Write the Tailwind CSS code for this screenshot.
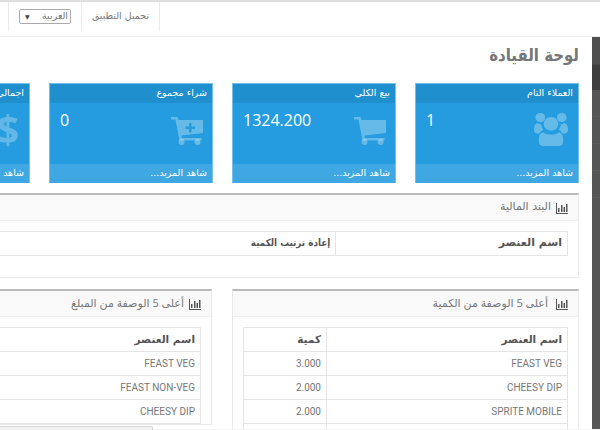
<!DOCTYPE html>
<html lang="ar" dir="rtl">
<head>
<meta charset="utf-8">
<script src="https://cdn.jsdelivr.net/npm/@tailwindcss/browser@4"></script>
<title>لوحة القيادة</title>
</head>
<body class="bg-white">
<div class="relative w-[600px] h-[430px] overflow-hidden bg-white font-['Open_Sans','DejaVu_Sans',sans-serif] text-[#666]">
  <!-- top bar -->
  <div class="h-[2px] bg-[#dfdfdf]"></div>
  <header dir="ltr" class="h-[35px] border-b border-[#eeeeee] flex items-start pl-2">
    <div class="h-[29px] w-[74px] border-x border-[#eaeaea] flex items-center justify-center">
      <div dir="rtl" class="w-[52px] h-[15px] border border-[#aaaaaa] rounded-[2px] flex items-center justify-between pr-[2px] pl-[5px] text-[9.500px] text-[#777] font-['DejaVu_Sans',sans-serif]">
        <span>العربية</span><span class="text-[6px] text-[#444]">▼</span>
      </div>
    </div>
    <div dir="rtl" class="h-[29px] w-[78px] border-r border-[#eaeaea] flex items-center justify-center text-[9.500px] text-[#777] font-['DejaVu_Sans',sans-serif]">تحميل التطبيق</div>
  </header>

  <div class="flex h-[393px]">
    <!-- right dark sidebar -->
    <aside class="w-2 shrink-0 flex flex-col bg-[#555555]">
      <div class="h-[28px] bg-[#4e4e4e] border-b border-[#484848]"></div>
      <div class="h-[25px] bg-[#3e3e3e]"></div>
      <div class="h-[27px] border-b border-[#5c5c5c]"></div>
      <div class="h-[27px] border-b border-[#5c5c5c]"></div>
      <div class="h-[27px] border-b border-[#5c5c5c]"></div>
      <div class="h-[27px] border-b border-[#5c5c5c]"></div>
    </aside>

    <main class="flex-1 min-w-0 pr-[13px] overflow-hidden">
      <h1 class="h-[46px] pt-[4px] text-[17px] leading-[28px] font-bold text-[#777] font-['DejaVu_Sans',sans-serif] origin-right scale-x-[0.88]">لوحة القيادة</h1>

      <!-- stat cards -->
      <div class="flex gap-[19px] h-[100px]">
        <div class="w-[164px] shrink-0 flex flex-col border border-b-0 border-[#74c0ea] bg-[#259cdf] text-white">
          <div class="h-[19px] bg-[#1f8fce] px-[5px] flex items-center text-[9.500px] font-['DejaVu_Sans',sans-serif]">العملاء التام</div>
          <div dir="ltr" class="flex-1 flex items-start justify-between pl-[10px] pr-[9px] pt-[6px]">
            <span class="text-[16px] leading-[22px]">1</span>
            <svg class="w-[36px] h-[34px] mt-[3px]" viewBox="0 0 37 37" preserveAspectRatio="none" fill="#fff" fill-opacity=".3">
              <circle cx="7.500" cy="6" r="5"/><circle cx="29.500" cy="6" r="5"/>
              <path d="M1 19c0-4 1-6.500 4-7 1 1 2 1.500 3.500 1.500 0 2 1 4.500 2.500 5.500-2 1-3.500 2.500-4 4.500-4 0-6-1-6-4.500zM36 19c0-4-1-6.500-4-7-1 1-2 1.500-3.500 1.500 0 2-1 4.500-2.500 5.500 2 1 3.500 2.500 4 4.500 4 0 6-1 6-4.500z"/>
              <circle cx="18.500" cy="13" r="7.500"/>
              <path d="M10 22c2 1.500 5 2.500 8.500 2.500s6.500-1 8.500-2.500c2.500 1 4 3.500 4 7v4c0 2-1.500 4-4 4H10c-2.500 0-4-2-4-4v-4c0-3.500 1.500-6 4-7z"/>
            </svg>
          </div>
          <div class="h-[19px] bg-[#3fa7e2] px-[5px] flex items-center text-[9.500px] font-['DejaVu_Sans',sans-serif]">شاهد المزيد...</div>
        </div>

        <div class="w-[164px] shrink-0 flex flex-col border border-b-0 border-[#74c0ea] bg-[#259cdf] text-white">
          <div class="h-[19px] bg-[#1f8fce] px-[5px] flex items-center text-[9.500px] font-['DejaVu_Sans',sans-serif]">بيع الكلي</div>
          <div dir="ltr" class="flex-1 flex items-start justify-between pl-[10px] pr-[9px] pt-[6px]">
            <span class="text-[16px] leading-[22px]">1324.200</span>
            <svg class="w-[32px] h-[28px] mt-[8px]" viewBox="0 0 32 28" fill="#fff" fill-opacity=".3">
              <path d="M0 0h6.500l1 3H32v13L10.500 18.500l.5 2.500h19.500v2.500H8.500L4.500 2.500H0z"/>
              <circle cx="10.500" cy="25" r="3"/><circle cx="26.500" cy="25" r="3"/>
            </svg>
          </div>
          <div class="h-[19px] bg-[#3fa7e2] px-[5px] flex items-center text-[9.500px] font-['DejaVu_Sans',sans-serif]">شاهد المزيد...</div>
        </div>

        <div class="w-[164px] shrink-0 flex flex-col border border-b-0 border-[#74c0ea] bg-[#259cdf] text-white">
          <div class="h-[19px] bg-[#1f8fce] px-[5px] flex items-center text-[9.500px] font-['DejaVu_Sans',sans-serif]">شراء مجموع</div>
          <div dir="ltr" class="flex-1 flex items-start justify-between pl-[10px] pr-[9px] pt-[6px]">
            <span class="text-[16px] leading-[22px]">0</span>
            <svg class="w-[32px] h-[28px] mt-[8px]" viewBox="0 0 32 28" fill="#fff" fill-opacity=".3">
              <path fill-rule="evenodd" d="M0 0h6.500l1 3H32v13L10.500 18.500l.5 2.500h19.500v2.500H8.500L4.500 2.500H0zM18 6v3.500h-3.500v2.500H18v3.500h2.500V12H24V9.500h-3.500V6z"/>
              <circle cx="10.500" cy="25" r="3"/><circle cx="26.500" cy="25" r="3"/>
            </svg>
          </div>
          <div class="h-[19px] bg-[#3fa7e2] px-[5px] flex items-center text-[9.500px] font-['DejaVu_Sans',sans-serif]">شاهد المزيد...</div>
        </div>

        <div class="w-[164px] shrink-0 flex flex-col border border-b-0 border-[#74c0ea] bg-[#259cdf] text-white">
          <div class="h-[19px] bg-[#1f8fce] px-[5px] flex items-center text-[9.500px] whitespace-nowrap font-['DejaVu_Sans',sans-serif]">اجمالي المصروفات</div>
          <div dir="ltr" class="flex-1 flex items-start justify-end pr-[10px] pt-[5px]">
            <span class="text-[40px] leading-[42px] font-bold text-white/30">$</span>
          </div>
          <div class="h-[19px] bg-[#3fa7e2] px-[5px] flex items-center text-[9.500px] font-['DejaVu_Sans',sans-serif]">شاهد المزيد...</div>
        </div>
      </div>

      <!-- wide panel -->
      <section class="mt-[10px] w-[800px] h-[85px] border border-[#e8e8e8] border-t-2 border-t-[#bbbbbb]">
        <div class="h-[26px] bg-[#f9f9f9] border-b border-[#eeeeee] px-[10px] flex items-center gap-[5px] text-[11px] text-[#777] font-['DejaVu_Sans',sans-serif]">
          <svg class="w-3 h-3 shrink-0" viewBox="0 0 12 12"><path d="M0 11h12v1H0zM0 1h1v10H0z" fill="#555"/><path d="M2 6h1.500v4H2zM5 3h1.500v7H5zM7.500 5H9v5H7.500zM10 2h1.500v8H10z" fill="#555"/></svg>
          <span>البند المالية</span>
        </div>
        <div class="px-[10px] pt-[10px]">
          <table class="w-full border-collapse text-[11px] font-bold text-[#555] font-['DejaVu_Sans',sans-serif]">
            <tr class="h-6">
              <th class="w-[232px] border border-[#e5e5e5] px-[5px] text-right">اسم العنصر</th>
              <th class="border border-[#e5e5e5] px-[5px] text-right"><span class="inline-block text-[10px] origin-right scale-x-[0.88]">إعادة ترتيب الكمية</span></th>
            </tr>
          </table>
        </div>
      </section>

      <!-- two table panels -->
      <div class="mt-[11px] flex gap-5 items-start">
        <section class="w-[347px] shrink-0 border border-[#e8e8e8] border-t-2 border-t-[#bbbbbb]">
          <div class="h-[26px] bg-[#f9f9f9] border-b border-[#eeeeee] px-[10px] flex items-center gap-[8px] text-[11px] text-[#777]">
            <svg class="w-3 h-3 shrink-0" viewBox="0 0 12 12"><path d="M0 11h12v1H0zM0 1h1v10H0z" fill="#555"/><path d="M2 6h1.500v4H2zM5 3h1.500v7H5zM7.500 5H9v5H7.500zM10 2h1.500v8H10z" fill="#555"/></svg>
            <span>أعلى 5 الوصفة من الكمية</span>
          </div>
          <div class="px-[10px] pt-[10px]">
            <table class="w-full border-collapse text-[10px] text-[#777] font-['Roboto','DejaVu_Sans',sans-serif]">
              <tr class="h-6 font-bold text-[#555]">
                <th class="w-[241px] border border-[#e5e5e5] px-[5px] text-right text-[10.500px] font-['DejaVu_Sans',sans-serif]">اسم العنصر</th>
                <th class="border border-[#e5e5e5] px-[5px] text-right text-[10.500px] font-['DejaVu_Sans',sans-serif]">كمية</th>
              </tr>
              <tr class="h-6"><td class="border border-[#e5e5e5] px-[5px] text-right">FEAST VEG</td><td class="border border-[#e5e5e5] px-[5px] text-right">3.000</td></tr>
              <tr class="h-6"><td class="border border-[#e5e5e5] px-[5px] text-right">CHEESY DIP</td><td class="border border-[#e5e5e5] px-[5px] text-right">2.000</td></tr>
              <tr class="h-6"><td class="border border-[#e5e5e5] px-[5px] text-right">SPRITE MOBILE</td><td class="border border-[#e5e5e5] px-[5px] text-right">2.000</td></tr>
              <tr class="h-6"><td class="border border-[#e5e5e5] px-[5px]"></td><td class="border border-[#e5e5e5] px-[5px]"></td></tr>
            </table>
          </div>
        </section>

        <section class="w-[347px] shrink-0 border border-[#e8e8e8] border-t-2 border-t-[#bbbbbb]">
          <div class="h-[26px] bg-[#f9f9f9] border-b border-[#eeeeee] px-[10px] flex items-center gap-[5px] text-[11px] text-[#777]">
            <svg class="w-3 h-3 shrink-0" viewBox="0 0 12 12"><path d="M0 11h12v1H0zM0 1h1v10H0z" fill="#555"/><path d="M2 6h1.500v4H2zM5 3h1.500v7H5zM7.500 5H9v5H7.500zM10 2h1.500v8H10z" fill="#555"/></svg>
            <span>أعلى 5 الوصفة من المبلغ</span>
          </div>
          <div class="px-[10px] pt-[10px]">
            <table class="w-full border-collapse text-[10px] text-[#777] font-['Roboto','DejaVu_Sans',sans-serif]">
              <tr class="h-6 font-bold text-[#555]">
                <th class="w-[241px] border border-[#e5e5e5] px-[5px] text-right text-[10.500px] font-['DejaVu_Sans',sans-serif]">اسم العنصر</th>
                <th class="border border-[#e5e5e5]"></th>
              </tr>
              <tr class="h-6"><td class="border border-[#e5e5e5] px-[5px] text-right">FEAST VEG</td><td class="border border-[#e5e5e5]"></td></tr>
              <tr class="h-6"><td class="border border-[#e5e5e5] px-[5px] text-right">FEAST NON-VEG</td><td class="border border-[#e5e5e5]"></td></tr>
              <tr class="h-6"><td class="border border-[#e5e5e5] px-[5px] text-right">CHEESY DIP</td><td class="border border-[#e5e5e5]"></td></tr>
            </table>
          </div>
        </section>
      </div>
    </main>
  </div>

  <!-- overlays at the bottom edge -->
  <div class="absolute left-0 bottom-0 w-[153px] h-[4px] bg-[#f2f2f2] border-t border-r border-[#d5d5d5] rounded-tr-[2px]"></div>
  <div class="absolute left-[153px] right-0 bottom-0 h-px bg-[#f4f4f4]"></div>
</div>
</body>
</html>
